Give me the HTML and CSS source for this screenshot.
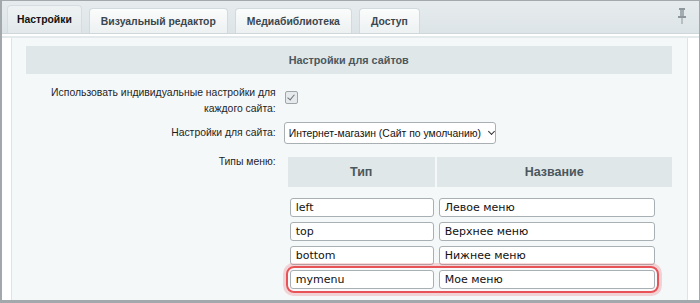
FILE: index.html
```html
<!DOCTYPE html>
<html lang="ru">
<head>
  <meta charset="UTF-8" />
  <title>Настройки меню</title>
  <link rel="stylesheet" href="styles.css">
</head>
<body>
  <div class="frame">
    <div class="tabs">
      <div class="tab active">Настройки</div>
      <div class="tab">Визуальный редактор</div>
      <div class="tab">Медиабиблиотека</div>
      <div class="tab">Доступ</div>
      <svg class="pin" width="10" height="16" viewBox="0 0 10 16">
        <rect x="2" y="0" width="6" height="2" fill="#8d979c"/>
        <rect x="3" y="2" width="4" height="6" fill="#a3acb0"/>
        <rect x="1" y="8" width="8" height="2" fill="#8d979c"/>
        <rect x="4.5" y="10" width="1" height="6" fill="#8d979c"/>
      </svg>
    </div>

    <div class="body">
      <div class="side"></div>
      <div class="panel">
        <div class="heading">Настройки для сайтов</div>

        <div class="row first">
          <div class="label">Использовать индивидуальные настройки для каждого сайта:</div>
          <div class="field"><span class="check"></span></div>
        </div>

        <div class="row second">
          <div class="label">Настройки для сайта:</div>
          <div class="field">
            <div class="select">Интернет-магазин (Сайт по умолчанию)<span class="chevron"></span></div>
          </div>
        </div>

        <div class="row menus">
          <div class="label">Типы меню:</div>
          <div class="field">
            <div class="menu-table">
              <div class="menu-head">
                <div>Тип</div>
                <div>Название</div>
              </div>
              <div class="menu-rows">
                <div class="menu-row"><div class="input type">left</div><div class="input name">Левое меню</div></div>
                <div class="menu-row"><div class="input type">top</div><div class="input name">Верхнее меню</div></div>
                <div class="menu-row"><div class="input type">bottom</div><div class="input name">Нижнее меню</div></div>
                <div class="menu-row marked"><div class="input type">mymenu</div><div class="input name">Мое меню</div></div>
              </div>
            </div>
          </div>
        </div>
      </div>
      <div class="side right"></div>
    </div>
  </div>
</body>
</html>
```

FILE: styles.css
```css
html, body {
  margin: 0;
  padding: 0;
  width: 700px;
  height: 303px;
  overflow: hidden;
  font-family: 'Liberation Sans', Arial, sans-serif;
  background: #fff;
}

.frame {
  height: 303px;
  box-sizing: border-box;
  border: 1px solid #a2a8ab;
  border-left-width: 2px;
  border-bottom-width: 3px;
  display: flex;
  flex-direction: column;
  overflow: hidden;
}

.tabs {
  height: 32px;
  flex: none;
  display: flex;
  align-items: flex-end;
  gap: 7px;
  padding-left: 5px;
  background: linear-gradient(#e6ecee, #dde4e7);
  border-bottom: 1px solid #cfd7da;
  box-shadow: 0 2px 0 #fff, 0 4px 0 #e4e9eb;
  position: relative;
}

.tab {
  height: 25px;
  box-sizing: border-box;
  padding: 0 11px;
  display: flex;
  align-items: center;
  border: 1px solid #d2dadd;
  border-bottom: none;
  border-radius: 4px 4px 0 0;
  background: linear-gradient(#fbfcfc, #edf1f2);
  font-size: 10.4px;
  font-weight: bold;
  color: #3a464e;
}

.tab.active {
  height: 28px;
  padding: 0 9px;
  color: #111;
  background: linear-gradient(#eef2f3, #e3e9eb);
  border-color: #d6dde0;
}

.pin {
  position: absolute;
  right: 12px;
  top: 7px;
}

.body {
  flex: 1;
  display: flex;
  margin-top: 4px;
}

.side {
  width: 10px;
  background: #fff;
  border-right: 1px solid #dde3e6;
}

.side.right {
  width: 13px;
  border-right: none;
  border-left: 1px solid #dde3e6;
}

.panel {
  flex: 1;
  background: #f5f8f9;
  padding: 8px 15px 0 14px;
}

.heading {
  height: 28px;
  background: #e0e7e9;
  display: flex;
  align-items: center;
  justify-content: center;
  font-size: 10.8px;
  font-weight: bold;
  color: #4a575e;
  margin-bottom: 11px;
}

.row {
  display: grid;
  grid-template-columns: 250px 1fr;
  column-gap: 8px;
  font-size: 10.4px;
  color: #1e1e1e;
}

.label {
  text-align: right;
  line-height: 16px;
  padding-top: 3px;
}

.row.first {
  margin-bottom: 5px;
}

.row.first .label {
  padding-left: 20px;
  padding-top: 0;
}

.row.second {
  margin-bottom: 10px;
}

.row.menus .label {
  padding-top: 0;
}

.check {
  display: inline-block;
  width: 11px;
  height: 11px;
  margin-top: 6px;
  margin-left: 1px;
  border: 1px solid #9fa6aa;
  border-radius: 2px;
  background: #e7eaec;
  position: relative;
}

.check::after {
  content: "";
  position: absolute;
  left: 3px;
  top: 1px;
  width: 3px;
  height: 6px;
  border: solid #6b7479;
  border-width: 0 1.5px 1.5px 0;
  transform: rotate(40deg);
}

.select {
  width: 212px;
  height: 22px;
  box-sizing: border-box;
  border: 1px solid #a9b0b4;
  border-radius: 3px;
  background: #fff;
  display: flex;
  align-items: center;
  padding-left: 4px;
  font-size: 10.4px;
  color: #111;
}

.chevron {
  width: 4px;
  height: 4px;
  margin-left: 8px;
  margin-top: -3px;
  border: solid #333;
  border-width: 0 1px 1px 0;
  transform: rotate(45deg);
}

.menu-table {
  margin-left: 4px;
  margin-top: 3px;
}

.menu-head {
  display: grid;
  grid-template-columns: 147px 235px;
  column-gap: 2px;
}

.menu-head div {
  height: 30px;
  background: #e0e7e9;
  display: flex;
  align-items: center;
  justify-content: center;
  font-size: 12.5px;
  font-weight: bold;
  color: #4a575e;
}

.menu-rows {
  display: flex;
  flex-direction: column;
  gap: 5px;
  margin-top: 11px;
  padding-left: 2px;
}

.menu-row {
  display: flex;
  gap: 5px;
  width: 365px;
  border-radius: 3px;
}

.menu-row.marked {
  outline: 2px solid #e85357;
  outline-offset: 2px;
  border-radius: 4px;
  box-shadow: 0 0 0 4px #f7f9fa, 0 0 0 7px rgba(232, 83, 87, 0.22);
}

.input {
  height: 19px;
  box-sizing: border-box;
  border: 1px solid #a9b0b4;
  border-radius: 3px;
  background: #fff;
  display: flex;
  align-items: center;
  padding-left: 5px;
  font-family: 'DejaVu Sans', Verdana, sans-serif;
  font-size: 11px;
  color: #111;
}

.input.type {
  width: 144px;
}

.input.name {
  width: 216px;
}
```
